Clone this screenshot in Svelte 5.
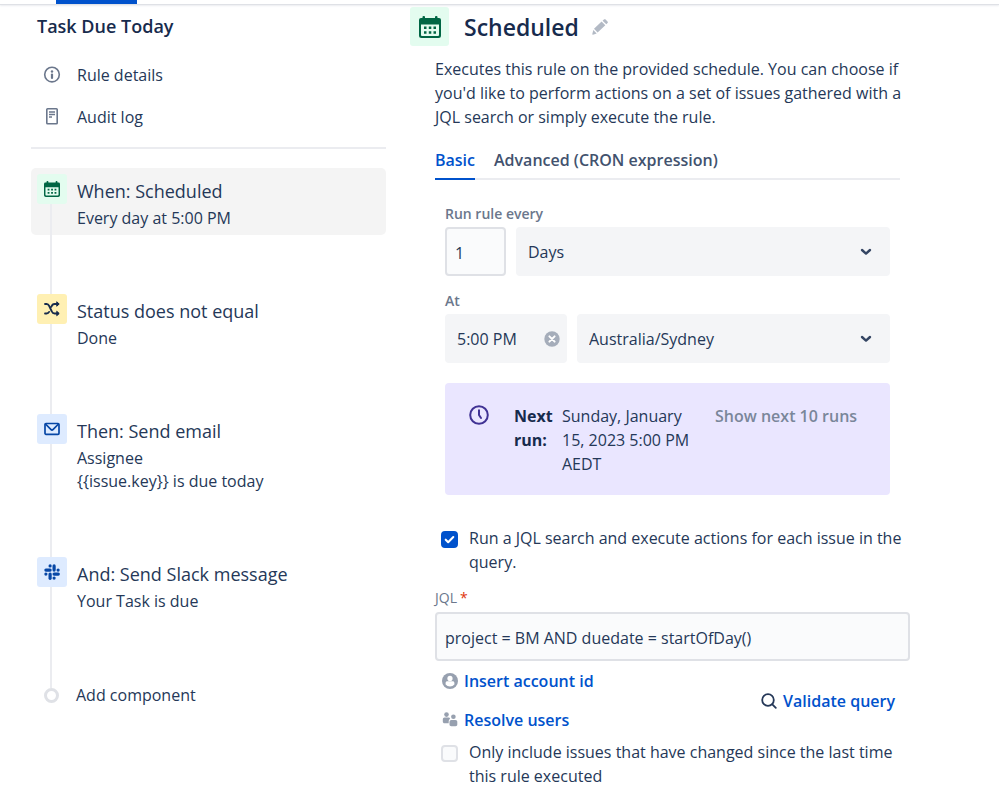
<script lang="ts">
  type Step = {
    icon: 'calendar' | 'shuffle' | 'mail' | 'slack';
    tone: 'green' | 'yellow' | 'blue';
    title: string;
    lines: string[];
  };

  const steps: Step[] = [
    { icon: 'calendar', tone: 'green', title: 'When: Scheduled', lines: ['Every day at 5:00 PM'] },
    { icon: 'shuffle', tone: 'yellow', title: 'Status does not equal', lines: ['Done'] },
    { icon: 'mail', tone: 'blue', title: 'Then: Send email', lines: ['Assignee', '{{issue.key}} is due today'] },
    { icon: 'slack', tone: 'blue', title: 'And: Send Slack message', lines: ['Your Task is due'] }
  ];

  let selected = $state(0);
  let tab = $state('basic');
  let count = $state('1');
  let time = $state('5:00 PM');
  let runSearch = $state(true);
  let onlyChanged = $state(false);
  let jql = $state('project = BM AND duedate = startOfDay()');
</script>

{#snippet calendar()}
  <svg viewBox="0 0 22 22" fill="currentColor" aria-hidden="true">
    <path fill-rule="evenodd" d="M2 2h18a2 2 0 0 1 2 2v15.500a2.500 2.500 0 0 1-2.500 2.500h-17A2.500 2.500 0 0 1 0 19.500V4a2 2 0 0 1 2-2zM2 8.500V19a1 1 0 0 0 1 1h16a1 1 0 0 0 1-1V8.500z" />
    <rect x="3.500" y="0" width="2.500" height="4" rx="1" />
    <rect x="16" y="0" width="2.500" height="4" rx="1" />
    <path d="M5 10.600h2.500v2.500H5zM9.800 10.600h2.500v2.500H9.800zM14.500 10.600H17v2.500h-2.500zM5 15.200h2.500v2.500H5zM9.800 15.200h2.500v2.500H9.800zM14.500 15.200H17v2.500h-2.500z" />
  </svg>
{/snippet}

{#snippet checkmark()}
  <svg viewBox="0 0 18 18" fill="none" stroke="#fff" stroke-width="2.2" stroke-linecap="round" stroke-linejoin="round" aria-hidden="true">
    <path d="M5 9.200l2.600 2.600L13 6.400" />
  </svg>
{/snippet}

{#snippet chevron()}
  <svg class="chevron" viewBox="0 0 12 12" fill="none" stroke="#344563" stroke-width="2.4" stroke-linecap="round" stroke-linejoin="round" aria-hidden="true">
    <path d="M2 4l4 3.600L10 4" />
  </svg>
{/snippet}

<div class="topbar"><span class="current"></span></div>

<div class="page">
  <aside>
    <h2>Task Due Today</h2>
    <nav>
      <a href="#details">
        <svg viewBox="0 0 18 18" fill="none" stroke="currentColor" aria-hidden="true">
          <circle cx="9" cy="8.600" r="7.300" stroke-width="1.600" />
          <circle cx="9" cy="5.500" r="1.200" fill="currentColor" stroke="none" />
          <path d="M9 8.500v3.400" stroke-width="2.200" stroke-linecap="round" />
        </svg>
        Rule details
      </a>
      <a href="#audit">
        <svg viewBox="0 0 18 18" fill="none" stroke="currentColor" aria-hidden="true">
          <rect x="3.800" y="0.800" width="10.400" height="15" rx="0.800" stroke-width="1.600" />
          <path d="M6 4h6M6 6.500h6M6 9h3" stroke-width="1.300" />
        </svg>
        Audit log
      </a>
    </nav>

    <ol>
      {#each steps as step, i}
        <li>
          <button class="step" class:selected={selected === i} onclick={() => (selected = i)}>
            <span class="badge {step.tone}">
              {#if step.icon === 'calendar'}
                {@render calendar()}
              {:else if step.icon === 'shuffle'}
                <svg viewBox="0 0 16 16" fill="none" stroke="currentColor" stroke-width="1.8" stroke-linecap="round" stroke-linejoin="round" aria-hidden="true">
                  <path d="M1 3h1.600c1.400 0 2 .7 2.600 2l2.600 5.500c.6 1.400 1.400 2 2.800 2H14M1 12.500h1.600c1.200 0 2-.6 2.500-1.600M7.400 5.800C8 4 8.900 3 10.600 3H14" />
                  <path d="M13 1l2.200 2L13 5zM13 10.500l2.200 2-2.200 2z" fill="currentColor" stroke-width="1" />
                </svg>
              {:else if step.icon === 'mail'}
                <svg viewBox="0 0 16 16" fill="none" stroke="currentColor" stroke-width="1.7" stroke-linejoin="round" aria-hidden="true">
                  <rect x="1" y="2.500" width="14" height="10.800" rx="1" />
                  <path d="M1.500 3l5.300 5.400c.7.700 1.700.7 2.400 0L14.500 3" />
                </svg>
              {:else}
                <svg viewBox="0 0 16 16" fill="currentColor" aria-hidden="true">
                  <rect x="4.500" y="0.300" width="3.200" height="3.200" rx="1.600" />
                  <rect x="0.300" y="4.500" width="7.400" height="3.200" rx="1.600" />
                  <rect x="8.500" y="0.300" width="3.200" height="7.400" rx="1.600" />
                  <rect x="12.500" y="4.500" width="3.200" height="3.200" rx="1.600" />
                  <rect x="8.500" y="8.500" width="7.400" height="3.200" rx="1.600" />
                  <rect x="8.500" y="12.500" width="3.200" height="3.200" rx="1.600" />
                  <rect x="4.500" y="8.500" width="3.200" height="7.400" rx="1.600" />
                  <rect x="0.300" y="8.500" width="3.200" height="3.200" rx="1.600" />
                </svg>
              {/if}
            </span>
            <span class="info">
              <span class="name">{step.title}</span>
              {#each step.lines as line}
                <span class="line">{line}</span>
              {/each}
            </span>
          </button>
        </li>
      {/each}
      <li>
        <button class="add"><span class="dot"></span>Add component</button>
      </li>
    </ol>
  </aside>

  <main>
    <header>
      <span class="badge large green">{@render calendar()}</span>
      <h1>Scheduled</h1>
      <button class="edit" aria-label="Rename">
        <svg viewBox="0 0 16 16" fill="#b3bac5" aria-hidden="true">
          <path d="M2 9.800L9.600 2.600l3.700 3.700-7.700 7.300zM1.300 11l3.400 3.400-3.700 1.300c-.5.100-.8-.2-.7-.7zM10.600 1.700l1.300-1.200c.5-.5 1.200-.5 1.700 0l1.900 1.900c.5.500.5 1.200 0 1.700l-1.200 1.200z" />
        </svg>
      </button>
    </header>

    <div class="content">
      <p class="description">
        Executes this rule on the provided schedule. You can choose if you'd like to perform actions on a set of issues gathered with a JQL search or simply execute the rule.
      </p>

      <div class="tabs" role="tablist">
        <button role="tab" aria-selected={tab === 'basic'} class:active={tab === 'basic'} onclick={() => (tab = 'basic')}>Basic</button>
        <button role="tab" aria-selected={tab === 'cron'} class:active={tab === 'cron'} onclick={() => (tab = 'cron')}>Advanced (CRON expression)</button>
      </div>

      <div class="schedule">
        <label class="caption" for="count">Run rule every</label>
        <div class="row">
          <input id="count" class="field count" type="text" bind:value={count} />
          <div class="select">
            <select aria-label="Unit">
              <option>Days</option>
            </select>
            {@render chevron()}
          </div>
        </div>

        <label class="caption" for="time">At</label>
        <div class="row">
          <div class="time">
            <input id="time" type="text" bind:value={time} />
            <button aria-label="Clear time" onclick={() => (time = '')}>
              <svg viewBox="0 0 16 16" aria-hidden="true">
                <circle cx="8" cy="8" r="7.700" fill="#a5adba" />
                <path d="M5.400 5.400l5.200 5.200M10.600 5.400l-5.200 5.200" stroke="#fff" stroke-width="2" stroke-linecap="round" />
              </svg>
            </button>
          </div>
          <div class="select">
            <select aria-label="Time zone">
              <option>Australia/Sydney</option>
            </select>
            {@render chevron()}
          </div>
        </div>

        <section class="next">
          <svg viewBox="0 0 20 20" fill="none" stroke="#403294" stroke-width="2" stroke-linecap="round" stroke-linejoin="round" aria-hidden="true">
            <circle cx="10" cy="10" r="8.800" />
            <path d="M10 5.200V10l2 3" />
          </svg>
          <strong>Next run:</strong>
          <span class="date">Sunday, January 15, 2023 5:00 PM AEDT</span>
          <button>Show next 10 runs</button>
        </section>
      </div>

      <label class="check">
        <span class="box">
          <input type="checkbox" bind:checked={runSearch} />
          {#if runSearch}{@render checkmark()}{/if}
        </span>
        <span>Run a JQL search and execute actions for each issue in the query.</span>
      </label>

      <label class="caption jql-label" for="jql">JQL<span class="required">*</span></label>
      <input id="jql" class="field jql" type="text" bind:value={jql} />

      <div class="actions">
        <div class="links">
          <a href="#account">
            <svg viewBox="0 0 16 16" aria-hidden="true">
              <circle cx="8" cy="8" r="8" fill="#97a0af" />
              <circle cx="8" cy="5.400" r="2.600" fill="#fff" />
              <path d="M3.600 11.500V10c0-1.100.8-1.700 1.800-1.700h5.200c1 0 1.800.6 1.800 1.700v1.500A5.600 5.600 0 0 1 8 13.600a5.600 5.600 0 0 1-4.400-2.100z" fill="#fff" />
            </svg>
            Insert account id
          </a>
          <a href="#users">
            <svg viewBox="0 0 16 16" fill="#97a0af" aria-hidden="true">
              <circle cx="4.500" cy="2.600" r="2.300" />
              <path d="M.8 7.500c0-1.100.7-1.900 1.800-1.900h3.800c.9 0 1.500.5 1.700 1.200-.7.600-1.400 1.500-1.400 2.600v1.900H2.600c-1.100 0-1.800-.7-1.800-1.800z" />
              <circle cx="11.400" cy="4.700" r="2.300" />
              <path d="M7.500 10c0-1.300.7-2 1.900-2h4c1.200 0 1.900.7 1.900 2v2.600c0 1.100-.7 1.700-1.800 1.700H9.300c-1.100 0-1.800-.6-1.800-1.700z" />
            </svg>
            Resolve users
          </a>
        </div>
        <a href="#validate">
          <svg viewBox="0 0 16 16" fill="none" stroke="#253858" stroke-width="1.8" stroke-linecap="round" aria-hidden="true">
            <circle cx="7" cy="7" r="5.800" />
            <path d="M11.300 11.300l3.500 3.500" />
          </svg>
          Validate query
        </a>
      </div>

      <label class="check">
        <span class="box">
          <input type="checkbox" bind:checked={onlyChanged} />
          {#if onlyChanged}{@render checkmark()}{/if}
        </span>
        <span>Only include issues that have changed since the last time this rule executed</span>
      </label>
    </div>
  </main>
</div>

<style>
  :global(body) {
    margin: 0;
    background: #fff;
    color: #253858;
    font: 16px/24px 'Open Sans', 'Noto Sans', sans-serif;
  }

  * {
    box-sizing: border-box;
  }

  button,
  input,
  select {
    margin: 0;
    padding: 0;
    border: 0;
    background: none;
    color: inherit;
    font: inherit;
    text-align: left;
  }

  button {
    cursor: pointer;
  }

  svg {
    display: block;
    flex: none;
    width: 16px;
    height: 16px;
  }

  a {
    text-decoration: none;
  }

  .topbar {
    height: 5px;
    padding-left: 56px;
    border-bottom: 1px solid #dfe1e6;
    box-shadow: 0 1px 2px #ebecf0;
  }

  .current {
    display: block;
    width: 81px;
    height: 4px;
    background: #0052cc;
  }

  .page {
    display: grid;
    grid-template-columns: 355px minmax(0, 1fr);
    gap: 24px;
    padding: 2px 80px 0 31px;
  }

  h1,
  h2 {
    margin: 0;
    color: #172b4d;
    font-weight: 600;
  }

  h2 {
    padding: 7px 6px 0;
    font-size: 18px;
    line-height: 24px;
  }

  nav {
    padding: 16px 0 9px;
    border-bottom: 2px solid #ebecf0;
  }

  nav a {
    display: flex;
    align-items: center;
    gap: 16px;
    height: 42px;
    padding-left: 12px;
    color: inherit;
  }

  nav svg {
    width: 18px;
    height: 18px;
    color: #6b778c;
  }

  ol {
    display: flex;
    flex-direction: column;
    gap: 53px;
    margin: 19px 0 0;
    padding: 0;
    list-style: none;
  }

  li {
    position: relative;
  }

  /* rail that joins a step to the next one */
  li:not(:last-child)::after {
    content: '';
    position: absolute;
    top: 35px;
    left: 19px;
    width: 2px;
    height: calc(100% + 35px);
    background: #ebecf0;
  }

  .step {
    display: flex;
    gap: 10px;
    width: 100%;
    padding: 6px 6px 5px;
    border-radius: 5px;
  }

  .step.selected {
    background: #f4f4f4;
  }

  .badge {
    display: grid;
    flex: none;
    place-items: center;
    position: relative;
    z-index: 1;
    width: 30px;
    height: 30px;
    border-radius: 3px;
  }

  .badge.large {
    width: 39px;
    height: 39px;
  }

  .badge.large svg {
    width: 22px;
    height: 22px;
  }

  .green {
    background: #e3fcef;
    color: #006644;
  }

  .yellow {
    background: #fff0b3;
    color: #172b4d;
  }

  .blue {
    background: #deebff;
    color: #0747a6;
  }

  .info {
    display: flex;
    flex-direction: column;
    padding-top: 5px;
  }

  .name {
    margin-bottom: 4px;
    font-size: 18px;
    line-height: 24px;
  }

  .line {
    line-height: 23px;
  }

  .add {
    display: flex;
    align-items: center;
    gap: 17px;
    width: 100%;
    padding: 12px 0 12px 13px;
  }

  .dot {
    width: 15px;
    height: 15px;
    border: 3px solid #dfe1e6;
    border-radius: 50%;
  }

  header {
    display: flex;
    align-items: center;
    height: 39px;
  }

  h1 {
    margin-left: 15px;
    font-size: 23px;
    line-height: 32px;
  }

  .edit {
    margin-left: 13px;
  }

  .content {
    padding: 11px 0 0 25px;
  }

  .description {
    margin: 0;
  }

  .tabs {
    display: flex;
    gap: 19px;
    margin: 19px 19px 0 0;
    border-bottom: 2px solid #ebecf0;
  }

  .tabs button {
    margin-bottom: -2px;
    padding-bottom: 6px;
    border-bottom: 2px solid transparent;
    color: #42526e;
    font-weight: 600;
  }

  .tabs .active {
    border-color: #0052cc;
    color: #0052cc;
  }

  .schedule {
    padding: 24px 29px 0 10px;
  }

  .caption {
    display: block;
    color: #6b778c;
    font-size: 14px;
    font-weight: 600;
    line-height: 20px;
  }

  .row {
    display: flex;
    gap: 10px;
    margin: 3px 0 15px;
  }

  .field {
    height: 49px;
    border: 2px solid #dfe1e6;
    border-radius: 4px;
    background: #fafbfc;
  }

  .count {
    width: 61px;
    padding: 2px 8px 0;
  }

  .select {
    display: grid;
    flex: 1;
    align-items: center;
  }

  .select > * {
    grid-area: 1 / 1;
  }

  select {
    appearance: none;
    width: 100%;
    height: 49px;
    padding: 0 40px 0 12px;
    border-radius: 4px;
    background: #f4f5f7;
  }

  .chevron {
    justify-self: end;
    width: 12px;
    height: 12px;
    margin-right: 18px;
    pointer-events: none;
  }

  .time {
    display: flex;
    align-items: center;
    width: 122px;
    height: 49px;
    padding: 0 7px 0 12px;
    border-radius: 4px;
    background: #f4f5f7;
  }

  .time input {
    flex: 1;
    min-width: 0;
  }

  .next {
    display: flex;
    align-items: flex-start;
    margin-top: 20px;
    padding: 21px 24px 19px;
    border-radius: 4px;
    background: #eae6ff;
  }

  .next svg {
    width: 20px;
    height: 20px;
    margin: 1px 25px 0 0;
  }

  .next strong {
    width: 48px;
    color: #172b4d;
    font-weight: 700;
  }

  .next .date {
    width: 136px;
    margin-right: 17px;
  }

  .next button {
    flex: 1;
    color: #7a869a;
    font-weight: 600;
    white-space: nowrap;
  }

  .check {
    display: flex;
    gap: 11px;
    padding-left: 6px;
  }

  .schedule + .check {
    margin-top: 31px;
  }

  .box {
    display: grid;
    flex: none;
    width: 17px;
    height: 17px;
    margin-top: 5px;
  }

  .box > * {
    grid-area: 1 / 1;
    width: 17px;
    height: 17px;
  }

  .box input {
    appearance: none;
    border: 2px solid #dfe1e6;
    border-radius: 4px;
    background: #fafbfc;
  }

  .box input:checked {
    border-color: #0052cc;
    background: #0052cc;
  }

  .box svg {
    pointer-events: none;
  }

  .jql-label {
    margin-top: 14px;
    font-weight: 400;
  }

  .required {
    margin-left: 3px;
    color: #de350b;
  }

  .jql {
    width: calc(100% - 9px);
    margin-top: 4px;
    padding: 2px 8px 0;
  }

  .actions {
    display: flex;
    align-items: center;
    justify-content: space-between;
    padding: 8px 24px 8px 7px;
  }

  .links {
    display: flex;
    flex-direction: column;
    gap: 15px;
  }

  .actions a {
    display: flex;
    align-items: center;
    gap: 6px;
    color: #0052cc;
    font-weight: 600;
  }
</style>
